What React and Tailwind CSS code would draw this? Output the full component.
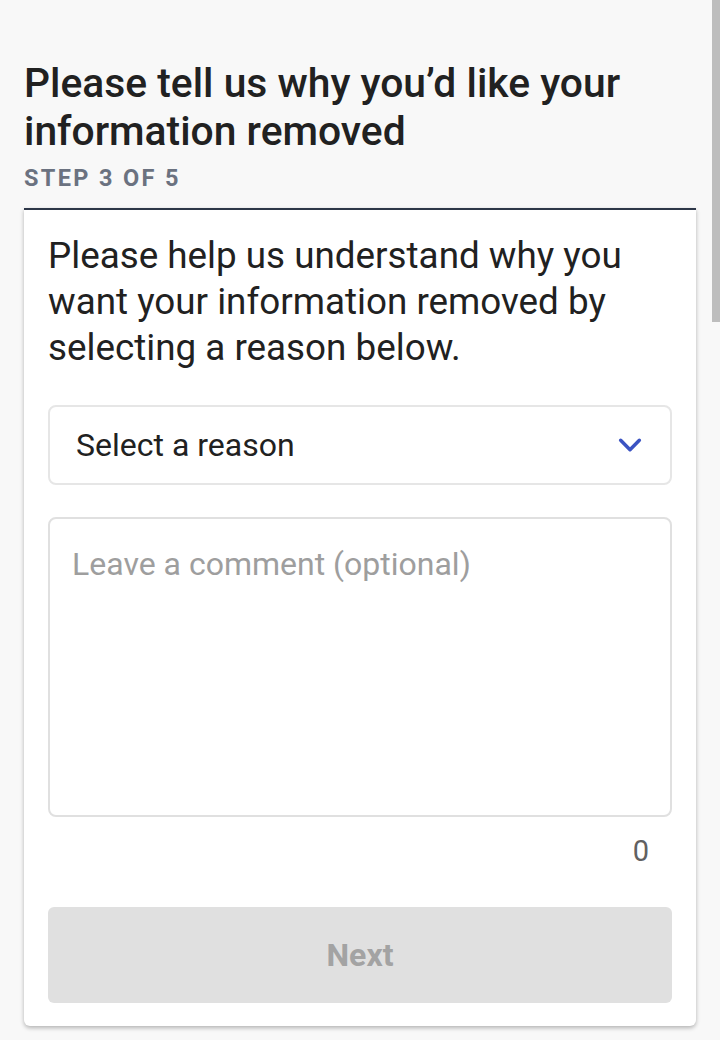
import React, { useState } from 'react';

const ChevronDown = () => (
    <svg width="28" height="28" viewBox="0 0 24 24" fill="none" stroke="#3b53c2" strokeWidth="3" strokeLinecap="round" strokeLinejoin="round">
        <path d="M4 8l8 8 8-8" />
    </svg>
);

export default function App() {
    const [comment, setComment] = useState('');

    return (
        <div className="relative min-h-[1040px] bg-[#f8f8f8] font-['Roboto',sans-serif] text-[#212121]">
            {/* overlay scrollbar */}
            <div className="absolute right-0 top-0 w-[8px] h-[322px] bg-[#bdbdbd]" />

            <div className="px-6 pt-[59px]">
                <h1 className="text-[40.8px] leading-[48px] font-medium">
                    Please tell us why you’d like your information removed
                </h1>
                <p className="mt-[8px] text-[23.5px] leading-[30px] font-bold tracking-[0.1em] text-[#6b7280]">
                    STEP 3 OF 5
                </p>

                <div className="mt-[15px] bg-white border-t-2 border-[#2d3748] rounded-b-md shadow-[0_2px_4px_rgba(0,0,0,0.28)] px-6 pt-[23px] pb-[23px]">
                    <p className="text-[36.8px] leading-[46px]">
                        Please help us understand why you want your information removed by selecting a reason below.
                    </p>

                    <div className="mt-[34px] h-[80px] border-2 border-[#e6e6e6] rounded-lg flex items-center justify-between pl-[26px] pr-[26px]">
                        <span className="text-[32px]">Select a reason</span>
                        <ChevronDown />
                    </div>

                    <textarea
                        value={comment}
                        onChange={(e) => setComment(e.target.value)}
                        placeholder="Leave a comment (optional)"
                        className="mt-[32px] block w-full h-[300px] border-2 border-[#e0e0e0] rounded-lg px-[22px] pt-[26px] text-[32px] leading-[38px] resize-none outline-none placeholder:text-[#9e9e9e]"
                    />

                    <div className="mt-[17px] text-right pr-[23px] text-[29px] leading-[34px] text-[#616161]">
                        {comment.length}
                    </div>

                    <button
                        disabled
                        className="mt-[39px] w-full h-[96px] rounded-md bg-[#e0e0e0] text-[32px] font-bold text-[#a3a3a3]"
                    >
                        Next
                    </button>
                </div>
            </div>
        </div>
    );
}
